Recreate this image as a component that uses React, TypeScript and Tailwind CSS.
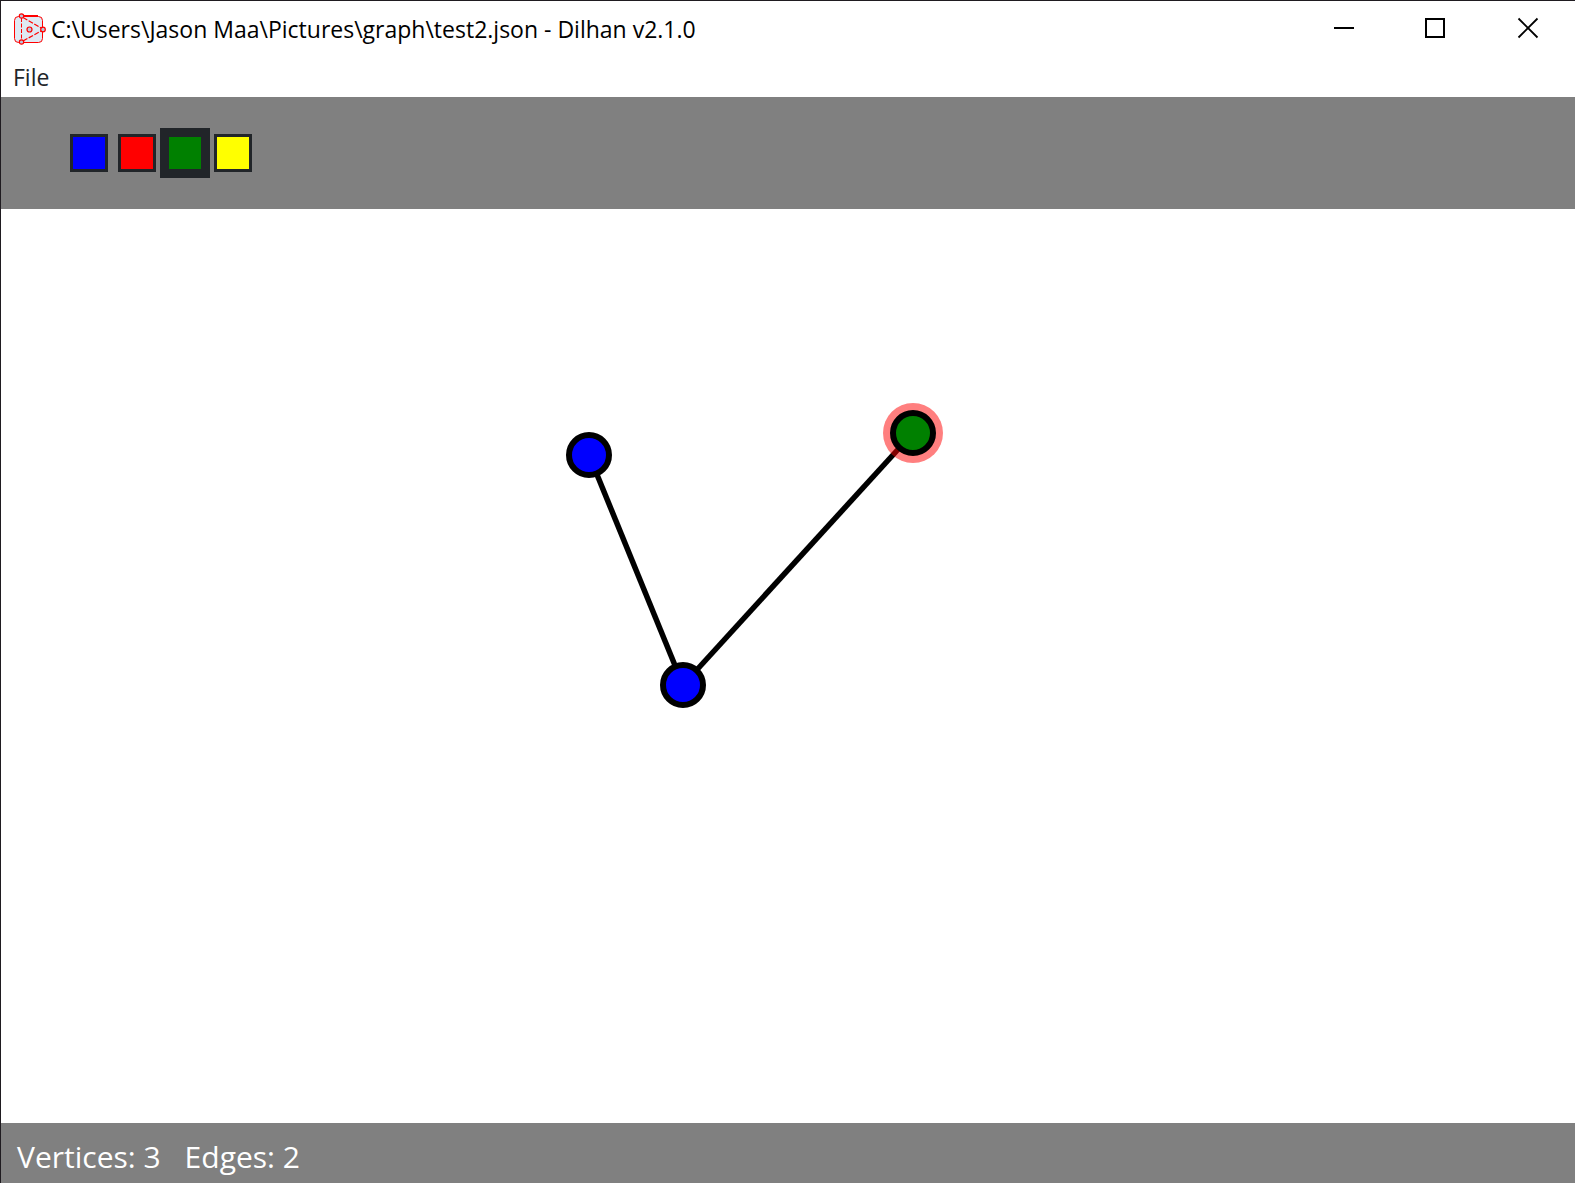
import { useState } from "react";

type Vertex = { id: number; x: number; y: number; fill: string; selected?: boolean };

const vertices: Vertex[] = [
  { id: 1, x: 588, y: 246, fill: "#0000ff" },
  { id: 2, x: 682, y: 476, fill: "#0000ff" },
  { id: 3, x: 912, y: 224, fill: "#008000", selected: true },
];

const edges: [number, number][] = [
  [0, 1],
  [1, 2],
];

const palette = [
  { name: "Blue", className: "bg-[#0000ff]" },
  { name: "Red", className: "bg-[#ff0000]" },
  { name: "Green", className: "bg-[#008000]" },
  { name: "Yellow", className: "bg-[#ffff00]" },
];

function AppIcon() {
  return (
    <svg width="33" height="32" viewBox="0 0 33 32" fill="none" stroke="#ff0000" aria-hidden="true">
      <rect x="1.5" y="3.5" width="28" height="26" rx="4" fill="#dfe9f3" />
      <path d="M9 3H25" strokeWidth="2" />
      <path d="M8.5 5V27" strokeDasharray="4 1.5" />
      <path d="M10 4.5L29 15.5" strokeDasharray="5 1.5" strokeWidth="1.2" />
      <path d="M10 28L29 17.5" strokeDasharray="5 1.5" strokeWidth="1.2" />
      <g fill="#b8c8dc" strokeWidth="1.2">
        <circle cx="8.5" cy="3" r="2.2" />
        <circle cx="8.5" cy="29" r="2.2" />
        <circle cx="30" cy="16.5" r="2.3" />
        <circle cx="16.5" cy="16.5" r="2.5" />
      </g>
    </svg>
  );
}

function TitleBar() {
  return (
    <header className="flex h-14 items-center pl-3">
      <AppIcon />
      <h1 className="ml-[5px] flex-1 truncate text-[23px] text-black">
        C:\Users\Jason Maa\Pictures\graph\test2.json - Dilhan v2.1.0
      </h1>
      <div className="flex self-stretch">
        <button type="button" aria-label="Minimize" className="flex w-[92px] items-center justify-center hover:bg-gray-200">
          <svg width="24" height="24" viewBox="0 0 24 24" fill="#000">
            <rect x="1" y="10" width="20" height="2" />
          </svg>
        </button>
        <button type="button" aria-label="Maximize" className="flex w-[92px] items-center justify-center hover:bg-gray-200">
          <svg width="24" height="24" viewBox="0 0 24 24" fill="none" stroke="#000" strokeWidth="2">
            <rect x="1" y="2" width="18" height="18" />
          </svg>
        </button>
        <button type="button" aria-label="Close" className="flex w-[92px] items-center justify-center hover:bg-red-500">
          <svg width="24" height="24" viewBox="0 0 24 24" fill="none" stroke="#000" strokeWidth="1.8">
            <path d="M1.5 1.5L20.5 20.5M20.5 1.5L1.5 20.5" />
          </svg>
        </button>
      </div>
    </header>
  );
}

function Toolbar() {
  const [active, setActive] = useState("Green");
  return (
    <div role="toolbar" aria-label="Vertex colours" className="flex h-28 items-center gap-2.5 bg-[#808080] pl-[69px]">
      {palette.map((c) => (
        <button
          key={c.name}
          type="button"
          aria-label={c.name}
          aria-pressed={active === c.name}
          onClick={() => setActive(c.name)}
          className={`size-[38px] border-3 border-[#212529] ${c.className} ${
            active === c.name ? "ring-6 ring-[#212529]" : ""
          }`}
        />
      ))}
    </div>
  );
}

function GraphCanvas() {
  return (
    <main className="min-h-0 flex-1">
      <svg className="block h-full w-full" role="img" aria-label="Graph">
        {edges.map(([a, b]) => (
          <line
            key={`${a}-${b}`}
            x1={vertices[a].x}
            y1={vertices[a].y}
            x2={vertices[b].x}
            y2={vertices[b].y}
            stroke="#000"
            strokeWidth="5.5"
          />
        ))}
        {vertices.map((v) => (
          <g key={v.id}>
            {v.selected && <circle cx={v.x} cy={v.y} r="30" fill="#ff0000" fillOpacity="0.5" />}
            <circle cx={v.x} cy={v.y} r="20" fill={v.fill} stroke="#000" strokeWidth="6" />
          </g>
        ))}
      </svg>
    </main>
  );
}

export default function App() {
  return (
    <div className="flex h-screen flex-col border-t border-l border-[#1f1b20] bg-white font-['Open_Sans','Noto_Sans',sans-serif]">
      <TitleBar />
      <nav className="flex h-10 items-center pl-3">
        <button type="button" className="text-[23px] leading-8 text-[#212529]">
          File
        </button>
      </nav>
      <Toolbar />
      <GraphCanvas />
      <footer className="flex h-15 items-center gap-6 bg-[#808080] px-4 pt-1.5 text-[30px] text-white">
        <span>Vertices: {vertices.length}</span>
        <span>Edges: {edges.length}</span>
      </footer>
    </div>
  );
}
